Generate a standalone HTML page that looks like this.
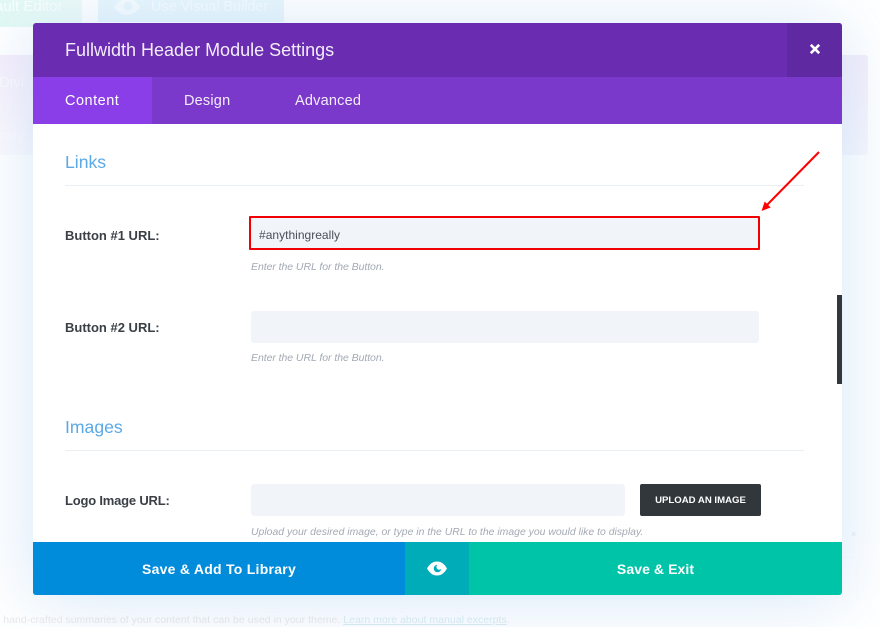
<!DOCTYPE html>
<html><head><meta charset="utf-8">
<style>
html,body{margin:0;padding:0}
body{width:880px;height:627px;position:relative;overflow:hidden;background:#fff;font-family:"Liberation Sans",Arial,sans-serif;filter:blur(.25px)}
.a{position:absolute;white-space:nowrap}
.help{font-style:italic;font-size:10.5px;color:#a3a9b3;left:251px;letter-spacing:-.06px}
.lab{font-weight:bold;font-size:13px;color:#3b4047;left:65px}
.h{font-size:17.6px;color:#5aa9e6;left:65px}
.rule{left:65px;width:739px;height:1px;background:#eaeff4}
.inp{background:#f1f4f9;border-radius:3px;height:33px}
</style></head><body>
<!-- backdrop -->
<div class="a" style="left:0;top:0;width:82px;height:27px;background:linear-gradient(90deg,#e2f9f3,#f0fbf9)"></div>
<div class="a" style="left:98px;top:0;width:186px;height:22px;background:#ebf7fc"></div>
<div class="a" style="left:-5px;top:-3px;font-size:15px;color:#fbfefd;line-height:20px">ault Editor</div>
<div class="a" style="left:151px;top:-3px;font-size:14.4px;color:#f8fcfe;line-height:20px">Use Visual Builder</div>
<svg class="a" style="left:113px;top:-3px" width="28" height="20" viewBox="0 0 28 20"><path d="M1 10C5 4 9 2 14 2s9 2 13 8c-4 6-8 8-13 8S5 16 1 10z" fill="#f8fcfe"/><circle cx="15" cy="9" r="4.500" fill="#ebf7fc"/></svg>
<div class="a" style="left:0;top:55px;width:33px;height:100px;background:linear-gradient(180deg,#f7effb,#fcfafd)"></div>
<div class="a" style="left:842px;top:55px;width:26px;height:100px;background:linear-gradient(180deg,#f5effb,#f8f8fd);border-radius:0 3px 3px 0"></div>
<div class="a" style="left:-2px;top:613px;font-size:10.5px;line-height:14px;color:#ece9e9;letter-spacing:.02px">l hand-crafted summaries of your content that can be used in your theme. <span style="color:#dcecef;text-decoration:underline">Learn more about manual excerpts</span>.</div>
<div class="a" style="left:-1px;top:74px;font-size:15px;color:#fcfafe">Divi</div>
<div class="a" style="left:0;top:127px;font-size:14px;color:#fdfcfe">rary</div>
<div class="a" style="left:842px;top:557px;width:15px;height:43px;border:1px solid #fbfdfe;border-left:0"></div>
<div class="a" style="left:851px;top:529px;font-size:9px;line-height:10px;color:#e6ebee">×</div>
<!-- modal -->
<div class="a" style="left:33px;top:23px;width:809px;height:572px;background:#fff;border-radius:3px;box-shadow:0 4px 70px rgba(43,135,218,.2)">
  <div class="a" style="left:0;top:0;width:809px;height:54px;background:#6a2cb0;border-radius:3px 3px 0 0"></div>
  <div class="a" style="left:754px;top:0;width:55px;height:54px;background:#5f29a1;border-radius:0 3px 0 0"></div>
  <div class="a" style="left:0;top:54px;width:809px;height:47px;background:#7b39cc"></div>
  <div class="a" style="left:0;top:54px;width:119px;height:47px;background:#8a3ee8"></div>
</div>
<div class="a" style="left:65px;top:39px;font-size:18px;line-height:22px;color:#f3edfa">Fullwidth Header Module Settings</div>
<svg class="a" style="left:810px;top:44px" width="10" height="10" viewBox="0 0 10 10"><path d="M.8.8l8.400 8.400M9.200.8L.8 9.200" stroke="#fff" stroke-width="2.600"/></svg>
<div class="a" style="left:65px;top:92px;font-size:14.500px;line-height:18px;color:#fff;letter-spacing:.5px">Content</div>
<div class="a" style="left:184px;top:92px;font-size:14.500px;line-height:18px;color:#f3edfa;letter-spacing:.2px">Design</div>
<div class="a" style="left:295px;top:92px;font-size:14.500px;line-height:18px;color:#f3edfa;letter-spacing:.2px">Advanced</div>

<div class="a h" style="top:151px;line-height:22px">Links</div>
<div class="a rule" style="top:185px"></div>
<div class="a lab" style="top:228px;line-height:16px">Button #1 URL:</div>
<div class="a inp" style="left:251px;top:217px;width:508px;height:31px;border:0"></div>
<div class="a" style="left:249px;top:216px;width:507px;height:30px;border:2px solid #f00000;border-radius:1px"></div>
<div class="a" style="left:259px;top:228px;font-size:12px;line-height:15px;color:#4a4f57;letter-spacing:.02px">#anythingreally</div>
<div class="a help" style="top:261px;line-height:13px">Enter the URL for the Button.</div>
<div class="a lab" style="top:320px;line-height:16px">Button #2 URL:</div>
<div class="a inp" style="left:251px;top:311px;width:508px;height:32px"></div>
<div class="a help" style="top:352px;line-height:13px">Enter the URL for the Button.</div>
<div class="a h" style="top:416px;line-height:22px">Images</div>
<div class="a rule" style="top:450px"></div>
<div class="a lab" style="top:493px;line-height:16px;letter-spacing:-.2px">Logo Image URL:</div>
<div class="a inp" style="left:251px;top:484px;width:374px;height:32px"></div>
<div class="a" style="left:640px;top:484px;width:121px;background:#32373c;border-radius:2px;color:#fff;font-weight:bold;font-size:9.600px;line-height:31px;text-align:center;padding-top:1px;height:31px">UPLOAD AN IMAGE</div>
<div class="a help" style="top:526px;line-height:13px;letter-spacing:.02px;font-size:10.400px">Upload your desired image, or type in the URL to the image you would like to display.</div>

<!-- scrollbar -->
<div class="a" style="left:837px;top:295px;width:5px;height:89px;background:#32373c"></div>

<!-- arrow -->
<svg class="a" style="left:755px;top:145px" width="70" height="72" viewBox="0 0 70 72"><path d="M64 7L10 62" stroke="#f00" stroke-width="2" fill="none"/><path d="M6.500 66l3.200-9.500 6 6z" fill="#f00"/></svg>

<!-- footer -->
<div class="a" style="left:33px;top:542px;width:809px;height:53px;border-radius:0 0 3px 3px;overflow:hidden;background:#00c4a7">
  <div class="a" style="left:0;top:0;width:372px;height:53px;background:#008bdb"></div>
  <div class="a" style="left:372px;top:0;width:64px;height:53px;background:#00acb8"></div>
</div>
<div class="a" style="left:33px;top:559px;width:372px;text-align:center;color:#fff;font-weight:bold;font-size:14px;line-height:20px;letter-spacing:.26px">Save &amp; Add To Library</div>
<div class="a" style="left:469px;top:559px;width:373px;text-align:center;color:#fff;font-weight:bold;font-size:14px;line-height:20px;letter-spacing:.08px">Save &amp; Exit</div>
<svg class="a" style="left:427px;top:561px" width="20" height="15" viewBox="0 0 20 15"><path d="M0 7.500C3 2.500 6 .5 10 .5s7 2 10 7c-3 5-6 7-10 7s-7-2-10-7z" fill="#fff"/><circle cx="10.500" cy="7.500" r="3.800" fill="#00acb8"/><circle cx="12.300" cy="5.800" r="2.900" fill="#fff"/></svg>
</body></html>
